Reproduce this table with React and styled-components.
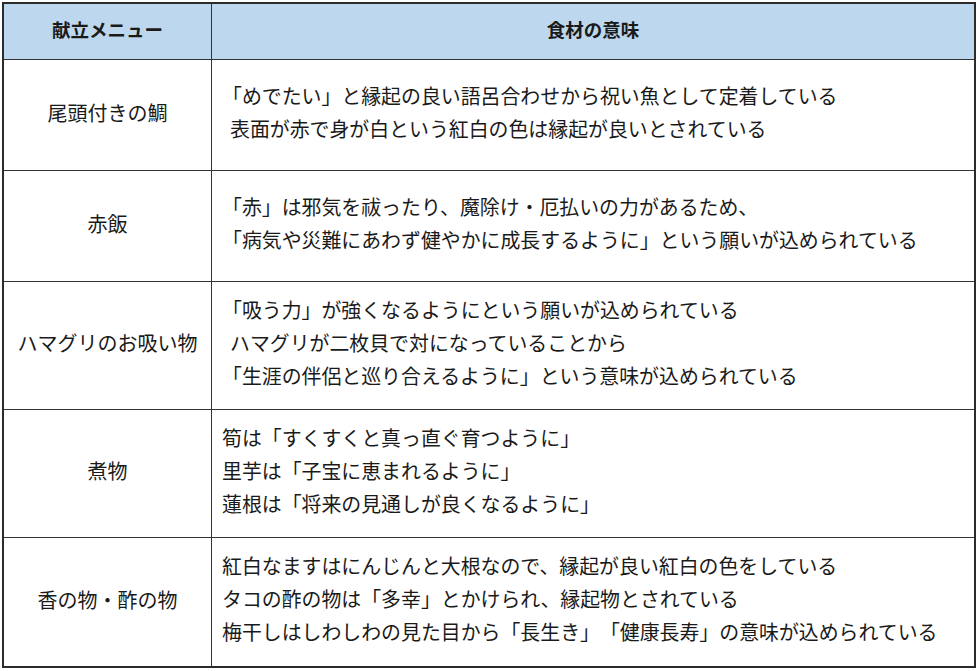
import React from 'react';
import styled, { createGlobalStyle } from 'styled-components';

const GlobalStyle = createGlobalStyle`
  body {
    margin: 0;
    background: #ffffff;
    font-family: "Noto Sans CJK JP", "Noto Sans", sans-serif;
    color: #1a1a1a;
    text-spacing-trim: space-all;
  }
`;

const Table = styled.div`
  margin: 2px 0 0 2px;
  width: 974px;
  box-sizing: border-box;
  border: 2px solid #2b2b2b;
  display: grid;
  grid-template-columns: 208px 1fr;
`;

const HeadCell = styled.div`
  height: 56px;
  padding-bottom: 6px;
  background: #bdd7ee;
  display: flex;
  align-items: center;
  justify-content: center;
  font-size: 18.5px;
  font-weight: 700;
  border-bottom: 1.5px solid #333;
  border-right: ${p => (p.$last ? 'none' : '1.5px solid #333')};
  box-sizing: border-box;
`;

const MenuCell = styled.div`
  height: ${p => p.$h}px;
  padding-bottom: 6px;
  display: flex;
  align-items: center;
  justify-content: center;
  font-size: 20px;
  border-right: 1.5px solid #333;
  border-bottom: ${p => (p.$last ? 'none' : '1.5px solid #333')};
  box-sizing: border-box;
`;

const MeaningCell = styled.div`
  height: ${p => p.$h}px;
  display: flex;
  flex-direction: column;
  justify-content: center;
  padding: 0 0 7px 10px;
  font-size: 19.9px;
  line-height: 33px;
  border-bottom: ${p => (p.$last ? 'none' : '1.5px solid #333')};
  box-sizing: border-box;
`;

const Line = styled.div`
  white-space: nowrap;
  padding-left: ${p => (p.$indent ? 8 : 0)}px;
`;

const rows = [
  {
    name: '尾頭付きの鯛',
    h: 111,
    lines: [
      ['「めでたい」と縁起の良い語呂合わせから祝い魚として定着している'],
      ['表面が赤で身が白という紅白の色は縁起が良いとされている', true],
    ],
  },
  {
    name: '赤飯',
    h: 111,
    lines: [
      ['「赤」は邪気を祓ったり、魔除け・厄払いの力があるため、'],
      ['「病気や災難にあわず健やかに成長するように」という願いが込められている'],
    ],
  },
  {
    name: 'ハマグリのお吸い物',
    h: 128,
    lines: [
      ['「吸う力」が強くなるようにという願いが込められている'],
      ['ハマグリが二枚貝で対になっていることから', true],
      ['「生涯の伴侶と巡り合えるように」という意味が込められている'],
    ],
  },
  {
    name: '煮物',
    h: 128,
    lines: [
      ['筍は「すくすくと真っ直ぐ育つように」'],
      ['里芋は「子宝に恵まれるように」'],
      ['蓮根は「将来の見通しが良くなるように」'],
    ],
  },
  {
    name: '香の物・酢の物',
    h: 128,
    lines: [
      ['紅白なますはにんじんと大根なので、縁起が良い紅白の色をしている'],
      ['タコの酢の物は「多幸」とかけられ、縁起物とされている'],
      ['梅干しはしわしわの見た目から「長生き」「健康長寿」の意味が込められている'],
    ],
  },
];

export default function App() {
  return (
    <>
      <GlobalStyle />
      <Table>
        <HeadCell>献立メニュー</HeadCell>
        <HeadCell $last>食材の意味</HeadCell>
        {rows.map((r, i) => {
          const last = i === rows.length - 1;
          return (
            <React.Fragment key={r.name}>
              <MenuCell $h={r.h} $last={last}>{r.name}</MenuCell>
              <MeaningCell $h={r.h} $last={last}>
                {r.lines.map(([t, indent]) => (
                  <Line key={t} $indent={indent}>{t}</Line>
                ))}
              </MeaningCell>
            </React.Fragment>
          );
        })}
      </Table>
    </>
  );
}
